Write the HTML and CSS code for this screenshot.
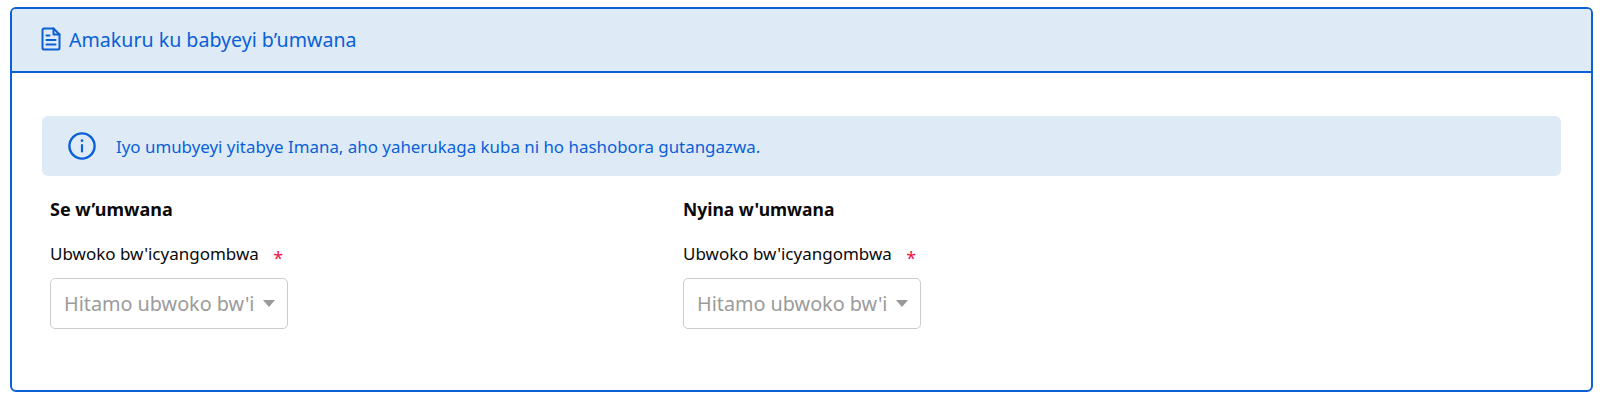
FILE: index.html
```html
<!DOCTYPE html>
<html lang="en">
  <head>
    <meta charset="UTF-8" />
    <title>Amakuru ku babyeyi</title>
    <link rel="stylesheet" href="styles.css">
  </head>
  <body>
    <section class="card">
      <header class="card-header">
        <svg class="doc-icon" viewBox="0 0 20 24" fill="none" stroke="currentColor" stroke-width="2" stroke-linejoin="round" stroke-linecap="round">
          <path d="M3 1.5h9.5l6 6V21a1.5 1.5 0 0 1-1.5 1.5H3A1.5 1.5 0 0 1 1.5 21V3A1.5 1.5 0 0 1 3 1.5z" />
          <path d="M12.5 1.5v6h6" />
          <path d="M5.5 8.5h3M5.5 13h9M5.5 17.5h9" />
        </svg>
        <span>Amakuru ku babyeyi b’umwana</span>
      </header>
      <div class="card-body">
        <div class="alert">
          <svg class="info-icon" viewBox="0 0 28 28" fill="none" stroke="currentColor" stroke-linecap="round">
            <circle cx="14" cy="14" r="12.6" stroke-width="2.4" />
            <path d="M14 13v6.5" stroke-width="2.2" />
            <path d="M14 8.6v.2" stroke-width="2.6" />
          </svg>
          <p>Iyo umubyeyi yitabye Imana, aho yaherukaga kuba ni ho hashobora gutangazwa.</p>
        </div>
        <div class="parents">
          <div class="parent">
            <h3>Se w’umwana</h3>
            <label>Ubwoko bw'icyangombwa <span class="required">*</span></label>
            <div class="select">
              <span class="placeholder">Hitamo ubwoko bw'i</span>
              <span class="caret"></span>
            </div>
          </div>
          <div class="parent">
            <h3 class="narrow">Nyina w'umwana</h3>
            <label>Ubwoko bw'icyangombwa <span class="required">*</span></label>
            <div class="select">
              <span class="placeholder">Hitamo ubwoko bw'i</span>
              <span class="caret"></span>
            </div>
          </div>
        </div>
      </div>
    </section>
  </body>
</html>
```

FILE: styles.css
```css
:root {
  --primary-color: #0b5fd7;
  --light-blue: #deebf7;
  --text-color: #0a0a0a;
}

* {
  margin: 0;
  padding: 0;
  box-sizing: border-box;
}

body {
  font-family: "Noto Sans", "Open Sans", sans-serif;
  background-color: #fff;
  color: var(--text-color);
  padding: 7px 7px 0 10px;
}

.card {
  height: 385px;
  border: 2px solid var(--primary-color);
  border-radius: 6px;
  overflow: hidden;
}

.card-header {
  display: flex;
  align-items: center;
  gap: 8px;
  height: 64px;
  padding: 0 0 2px 29px;
  background-color: var(--light-blue);
  border-bottom: 2px solid var(--primary-color);
  color: var(--primary-color);
  font-size: 19.6px;
}

.doc-icon {
  width: 20px;
  height: 24px;
}

.card-body {
  padding: 43px 30px 0;
}

.alert {
  display: flex;
  align-items: center;
  gap: 20px;
  height: 60px;
  padding-left: 26px;
  background-color: var(--light-blue);
  border-radius: 6px;
  color: var(--primary-color);
  font-size: 16.9px;
}

.info-icon {
  width: 28px;
  height: 28px;
}

.parents {
  display: flex;
  padding: 23px 0 0 8px;
}

.parent {
  width: 633px;
}

.parent h3 {
  font-size: 18px;
  font-weight: 700;
  line-height: 20px;
}

.parent h3.narrow {
  font-size: 17.5px;
}

.parent label {
  display: block;
  margin-top: 26px;
  font-size: 17px;
  line-height: 18px;
}

.required {
  margin-left: 10px;
  color: #f0134d;
  font-size: 18px;
  line-height: 0;
  vertical-align: -5px;
}

.select {
  display: flex;
  align-items: center;
  justify-content: space-between;
  width: 238px;
  height: 51px;
  margin-top: 15px;
  padding: 0 12px 0 13px;
  border: 1px solid #cccccc;
  border-radius: 5px;
  color: #9b9b9b;
  font-size: 19.8px;
  white-space: nowrap;
}

.caret {
  flex-shrink: 0;
  width: 0;
  height: 0;
  border-left: 6px solid transparent;
  border-right: 6px solid transparent;
  border-top: 7px solid #999;
}
```
